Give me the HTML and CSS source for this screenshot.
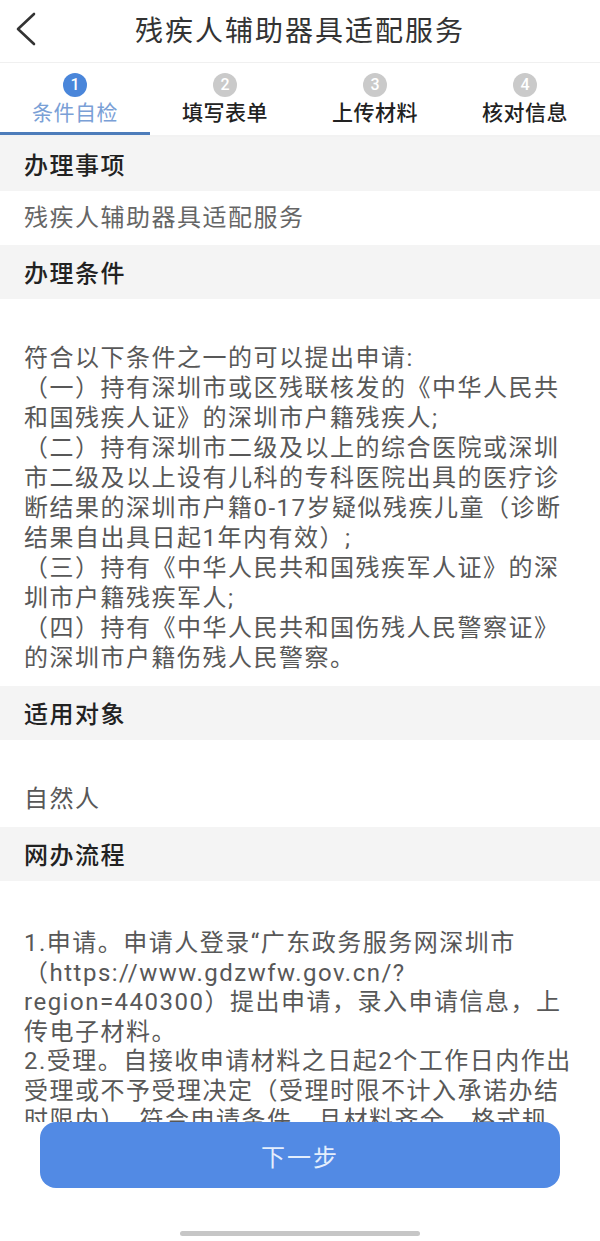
FILE: index.html
```html
<!DOCTYPE html>
<html lang="zh-CN">
<head>
<meta charset="utf-8">
<title>残疾人辅助器具适配服务</title>
<link rel="stylesheet" href="styles.css">
</head>
<body>
<div class="app">
  <header class="topbar">
    <button class="back" aria-label="返回">
      <svg width="24" height="34" viewBox="0 0 24 34"><path d="M20 2 L4 17 L20 32" fill="none" stroke="#333" stroke-width="2.6" stroke-linecap="round" stroke-linejoin="round"/></svg>
    </button>
    <h1 class="title">残疾人辅助器具适配服务</h1>
  </header>

  <nav class="steps">
    <div class="step active"><span class="num">1</span><span class="label">条件自检</span></div>
    <div class="step"><span class="num">2</span><span class="label">填写表单</span></div>
    <div class="step"><span class="num">3</span><span class="label">上传材料</span></div>
    <div class="step"><span class="num">4</span><span class="label">核对信息</span></div>
  </nav>

  <main class="content">
    <section>
      <h2 class="sec-head">办理事项</h2>
      <div class="sec-body compact">残疾人辅助器具适配服务</div>
    </section>
    <section>
      <h2 class="sec-head">办理条件</h2>
      <div class="sec-body">符合以下条件之一的可以提出申请:<br>（一）持有深圳市或区残联核发的《中华人民共<br>和国残疾人证》的深圳市户籍残疾人;<br>（二）持有深圳市二级及以上的综合医院或深圳<br>市二级及以上设有儿科的专科医院出具的医疗诊<br>断结果的深圳市户籍0-17岁疑似残疾儿童（诊断<br>结果自出具日起1年内有效）;<br>（三）持有《中华人民共和国残疾军人证》的深<br>圳市户籍残疾军人;<br>（四）持有《中华人民共和国伤残人民警察证》<br>的深圳市户籍伤残人民警察。</div>
    </section>
    <section>
      <h2 class="sec-head">适用对象</h2>
      <div class="sec-body">自然人</div>
    </section>
    <section>
      <h2 class="sec-head">网办流程</h2>
      <div class="sec-body flow">1.申请。申请人登录“广东政务服务网深圳市<br>（https://www.gdzwfw.gov.cn/?<br>region=440300）提出申请，录入申请信息，上<br>传电子材料。<br>2.受理。自接收申请材料之日起2个工作日内作出<br>受理或不予受理决定（受理时限不计入承诺办结<br>时限内）。符合申请条件，且材料齐全，格式规</div>
    </section>
  </main>

  <footer class="footer">
    <button class="next">下一步</button>
    <div class="home-bar"></div>
  </footer>
</div>
</body>
</html>
```

FILE: styles.css
```css
* { box-sizing: border-box; }

html, body {
  margin: 0;
  padding: 0;
  background: #fff;
}

body {
  font-family: Roboto, "Noto Sans CJK SC", sans-serif;
  width: 600px;
  height: 1241px;
  overflow: hidden;
}

.app {
  display: flex;
  flex-direction: column;
  height: 1241px;
}

.topbar {
  height: 63px;
  flex: none;
  display: flex;
  align-items: center;
  justify-content: center;
  position: relative;
  border-bottom: 1px solid #f0f0f0;
}

.back {
  position: absolute;
  left: 14px;
  top: 12px;
  border: 0;
  background: none;
  padding: 0;
  width: 24px;
  height: 34px;
}

.title {
  margin: 0;
  font-family: "Noto Sans CJK SC", sans-serif;
  font-size: 28px;
  font-weight: 400;
  letter-spacing: 2px;
  color: #333;
  line-height: 34px;
  padding-bottom: 4px;
}

.steps {
  flex: none;
  display: grid;
  grid-template-columns: repeat(4, 1fr);
  height: 74px;
  border-bottom: 2px solid #f2f2f2;
}

.step {
  display: flex;
  flex-direction: column;
  align-items: center;
  padding-top: 10px;
  gap: 1px;
  border-bottom: 3px solid transparent;
}

.step.active {
  border-bottom-color: #4d7cba;
}

.num {
  width: 24px;
  height: 24px;
  border-radius: 50%;
  background: #cacaca;
  color: #fff;
  font-family: Roboto, sans-serif;
  font-size: 16px;
  font-weight: 500;
  line-height: 24px;
  text-align: center;
}

.step.active .num {
  background: #4a86da;
}

.label {
  font-family: "Noto Sans CJK SC", sans-serif;
  font-size: 21px;
  line-height: 26px;
  letter-spacing: 0.5px;
  color: #222;
  font-weight: 500;
}

.step.active .label {
  color: #7aa0d6;
  font-weight: 400;
}

.content {
  flex: 1;
  min-height: 0;
  overflow: hidden;
}

.sec-head {
  margin: 0;
  height: 54px;
  line-height: 54px;
  padding: 0 24px;
  background: #f4f4f4;
  font-family: "Noto Sans CJK SC", sans-serif;
  font-size: 24px;
  font-weight: 500;
  letter-spacing: 1.5px;
  color: #222;
}

.sec-body {
  padding: 44px 24px 13px;
  font-size: 24px;
  line-height: 30px;
  letter-spacing: 1.5px;
  color: #585858;
  white-space: nowrap;
}

.sec-body.compact {
  padding: 12px 24px;
  color: #666;
}

.sec-body.flow {
  padding-top: 48px;
  line-height: 29.5px;
}

.footer {
  flex: none;
  height: 119px;
  background: #fff;
  display: flex;
  flex-direction: column;
  align-items: center;
}

.next {
  width: 520px;
  height: 66px;
  border: 0;
  border-radius: 16px;
  background: #528ae4;
  color: #e4eefc;
  font-family: "Noto Sans CJK SC", sans-serif;
  font-size: 24px;
  letter-spacing: 2px;
  padding: 0;
}

.home-bar {
  margin-top: 43px;
  width: 240px;
  height: 5px;
  border-radius: 3px;
  background: #c6c6c6;
}
```
